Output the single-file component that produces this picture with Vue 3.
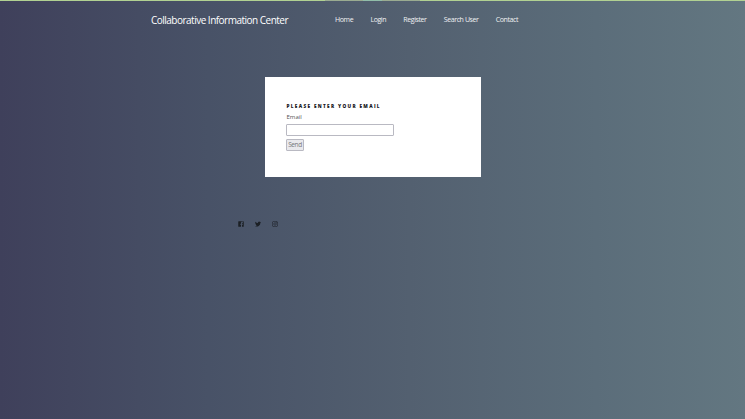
<script setup>
const links = ['Home', 'Login', 'Register', 'Search User', 'Contact']
</script>

<template>
  <div class="page">
    <div class="strip"><i class="muted"></i><i class="teal"></i><i class="muted"></i></div>
    <header class="header">
      <a class="brand">Collaborative Information Center</a>
      <nav class="nav">
        <a v-for="link in links" :key="link">{{ link }}</a>
      </nav>
    </header>
    <main class="card">
      <h1>Please enter your email</h1>
      <form @submit.prevent>
        <label for="email">Email</label>
        <input id="email" type="email" />
        <button type="submit">Send</button>
      </form>
    </main>
    <footer class="social">
      <svg viewBox="0 0 24 24" aria-label="Facebook">
        <path d="M3 1h18a2 2 0 0 1 2 2v18a2 2 0 0 1-2 2h-5v-8h3l.6-4H16V9c0-1.3.5-2 2-2h2V3.300h-3c-3.500 0-5 2-5 5V11H9v4h3v8H3a2 2 0 0 1-2-2V3a2 2 0 0 1 2-2z" />
      </svg>
      <svg viewBox="0 0 24 24" aria-label="Twitter">
        <path d="M24 4.600a10 10 0 0 1-2.800.8 5 5 0 0 0 2.100-2.700 10 10 0 0 1-3.100 1.200 4.900 4.900 0 0 0-8.400 4.500A14 14 0 0 1 1.700 3.200a4.900 4.900 0 0 0 1.500 6.500 5 5 0 0 1-2.200-.6 4.900 4.900 0 0 0 3.900 4.900 5 5 0 0 1-2.200.1 4.900 4.900 0 0 0 4.600 3.400A10 10 0 0 1 0 19.500 14 14 0 0 0 21.500 7a10 10 0 0 0 2.500-2.400z" />
      </svg>
      <svg class="outline" viewBox="0 0 24 24" aria-label="Instagram">
        <rect x="1.500" y="1.500" width="21" height="21" rx="6" />
        <circle cx="12" cy="12" r="5" />
        <circle cx="18" cy="6" r=".6" />
      </svg>
    </footer>
  </div>
</template>

<style>
body {
  margin: 0;
}
</style>

<style scoped>
.page {
  height: 419px;
  overflow: hidden;
  font-family: "Open Sans", sans-serif;
  background: linear-gradient(90deg, #3f405b 0%, #485267 28%, #536070 55%, #5b6d7a 80%, #637781 100%);
}
.strip {
  display: flex;
  justify-content: center;
  height: 1px;
  background: #b1d192;
}
.strip i {
  width: 38px;
}
.strip .muted {
  background: #9aab91;
}
.strip .teal {
  width: 19px;
  background: #91bda9;
}
.header {
  display: flex;
  align-items: center;
  height: 38px;
  padding-left: 151px;
  color: #fff;
}
.brand {
  width: 184px;
  font-size: 10px;
  letter-spacing: -0.510px;
  white-space: nowrap;
}
.nav {
  display: flex;
  gap: 17.200px;
  font-size: 7px;
  line-height: 10px;
  letter-spacing: -0.400px;
  color: #f0f1f3;
  white-space: nowrap;
}
.card {
  box-sizing: border-box;
  width: 216px;
  height: 100px;
  margin: 38px 0 0 265px;
  padding: 25px 21px 0;
  background: #fff;
}
h1 {
  margin: 0 0 0 0.500px;
  font-size: 4.700px;
  line-height: 8px;
  font-weight: 800;
  letter-spacing: 1.320px;
  text-transform: uppercase;
  white-space: nowrap;
  color: #17171c;
}
form {
  display: flex;
  flex-direction: column;
  align-items: flex-start;
}
label {
  margin: 2px 0 0 0.500px;
  font-size: 6px;
  line-height: 10px;
  color: #555;
}
input {
  box-sizing: border-box;
  width: 108px;
  height: 12px;
  margin: 2px 0 0;
  padding: 0 3px;
  border: 1px solid #b9b9c2;
  border-radius: 1px;
  outline: none;
  background: #fff;
  font: 6px "Open Sans", sans-serif;
}
button {
  box-sizing: border-box;
  width: 18px;
  height: 12px;
  margin: 3px 0 0;
  padding: 0;
  border: 1px solid #b9b9c2;
  border-radius: 1px;
  background: #e9e9ed;
  color: #77777b;
  font: 6.500px/10px "Open Sans", sans-serif;
  letter-spacing: -0.400px;
}
.social {
  display: flex;
  gap: 11px;
  margin: 44px 0 0 238px;
}
.social svg {
  width: 6px;
  height: 6px;
  fill: #1c2025;
}
.social .outline {
  fill: none;
  stroke: #1c2025;
  stroke-width: 2.200;
}
</style>
